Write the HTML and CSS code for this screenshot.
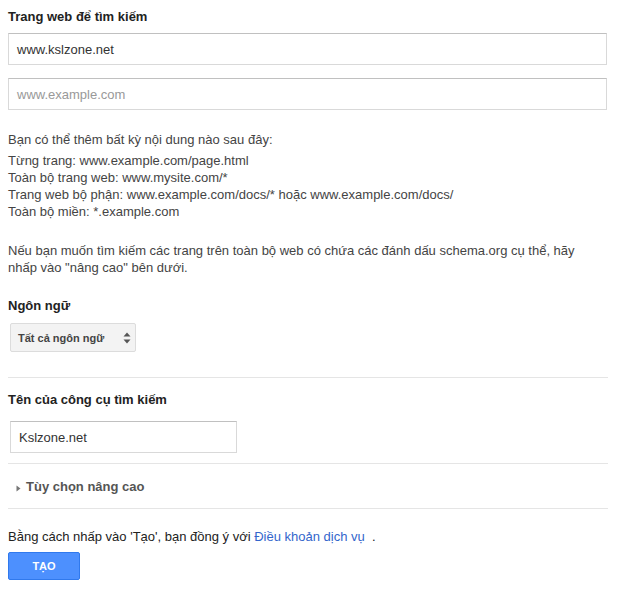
FILE: index.html
```html
<!DOCTYPE html>
<html lang="vi">
<head>
<meta charset="utf-8">
<link rel="stylesheet" href="styles.css">
</head>
<body>
<div class="page">
  <div class="label">Trang web để tìm kiếm</div>
  <div class="field wide"><span class="val">www.kslzone.net</span></div>
  <div class="field wide"><span class="ph">www.example.com</span></div>

  <div class="help">
    <p class="intro">Bạn có thể thêm bất kỳ nội dung nào sau đây:</p>
    <p>Từng trang: www.example.com/page.html<br>Toàn bộ trang web: www.mysite.com/*<br>Trang web bộ phận: www.example.com/docs/* hoặc www.example.com/docs/<br>Toàn bộ miền: *.example.com</p>
    <p class="note">Nếu bạn muốn tìm kiếm các trang trên toàn bộ web có chứa các đánh dấu schema.org cụ thể, hãy nhấp vào "nâng cao" bên dưới.</p>
  </div>

  <div class="label lang">Ngôn ngữ</div>
  <div class="select"><span>Tất cả ngôn ngữ</span>
    <svg class="arrows" width="8" height="12" viewBox="0 0 8 12"><path d="M4 0.5L7.5 4.5H0.5Z M4 11.5L7.5 7.5H0.5Z" fill="#555"/></svg>
  </div>

  <div class="sep first"></div>
  <div class="label name">Tên của công cụ tìm kiếm</div>
  <div class="field short"><span class="val">Kslzone.net</span></div>
  <div class="sep second"></div>

  <div class="adv">
    <svg class="tri" width="5" height="7" viewBox="0 0 5 7"><path d="M0.5 0.5L4.5 3.5L0.5 6.5Z" fill="#777"/></svg>
    <span>Tùy chọn nâng cao</span>
  </div>
  <div class="sep third"></div>

  <div class="terms">Bằng cách nhấp vào 'Tạo', bạn đồng ý với <a class="link">Điều khoản dịch vụ</a> &nbsp;.</div>
  <div class="btn">TẠO</div>
</div>
</body>
</html>
```
FILE: styles.css
```css
html, body { margin: 0; padding: 0; background: #fff; }
body { font-family: Arial, "Liberation Sans", sans-serif; font-size: 13px; color: #222; }
.page { padding: 8px 12px 0 8px; display: flex; flex-direction: column; align-items: flex-start; }
.label { font-weight: bold; font-size: 13px; color: #222; line-height: 17px; }
.field { box-sizing: border-box; height: 32px; border: 1px solid #d9d9d9; border-top-color: #c0c0c0; display: flex; align-items: center; padding-left: 8px; background: #fff; }
.wide { width: 599px; margin-top: 8px; }
.wide + .wide { margin-top: 13px; }
.val { color: #333; }
.ph { color: #999; }
.help { margin-top: 21px; color: #444; line-height: 17px; }
.help p { margin: 0; }
.help .intro { margin-bottom: 4px; }
.help .note { margin-top: 22px; width: 585px; }
.lang { margin-top: 21px; }
.select { box-sizing: border-box; margin-top: 9px; margin-left: 2px; width: 126px; height: 29px; border: 1px solid #dcdcdc; border-radius: 2px; background: #f3f3f3; display: flex; align-items: center; justify-content: space-between; padding: 0 4px 0 7px; font-size: 11px; font-weight: bold; color: #444; }
.arrows { display: block; }
.sep { width: 600px; height: 1px; background: #e5e5e5; }
.first { margin-top: 25px; }
.name { margin-top: 13px; }
.short { width: 227px; margin-top: 13px; margin-left: 2px; height: 32px; }
.second { margin-top: 10px; }
.adv { height: 44px; display: flex; align-items: center; color: #555; font-weight: bold; font-size: 13px; }
.tri { margin: 5px 5px 0 8px; display: block; }
.third { margin-top: 0; }
.terms { margin-top: 20px; color: #222; line-height: 16px; }
.link { color: #3366cc; text-decoration: none; }
.btn { box-sizing: border-box; margin-top: 7px; width: 72px; height: 28px; background: #4d90fe; border: 1px solid #3079ed; border-radius: 2px; color: #fff; font-weight: bold; font-size: 11px; display: flex; align-items: center; justify-content: center; }
```
